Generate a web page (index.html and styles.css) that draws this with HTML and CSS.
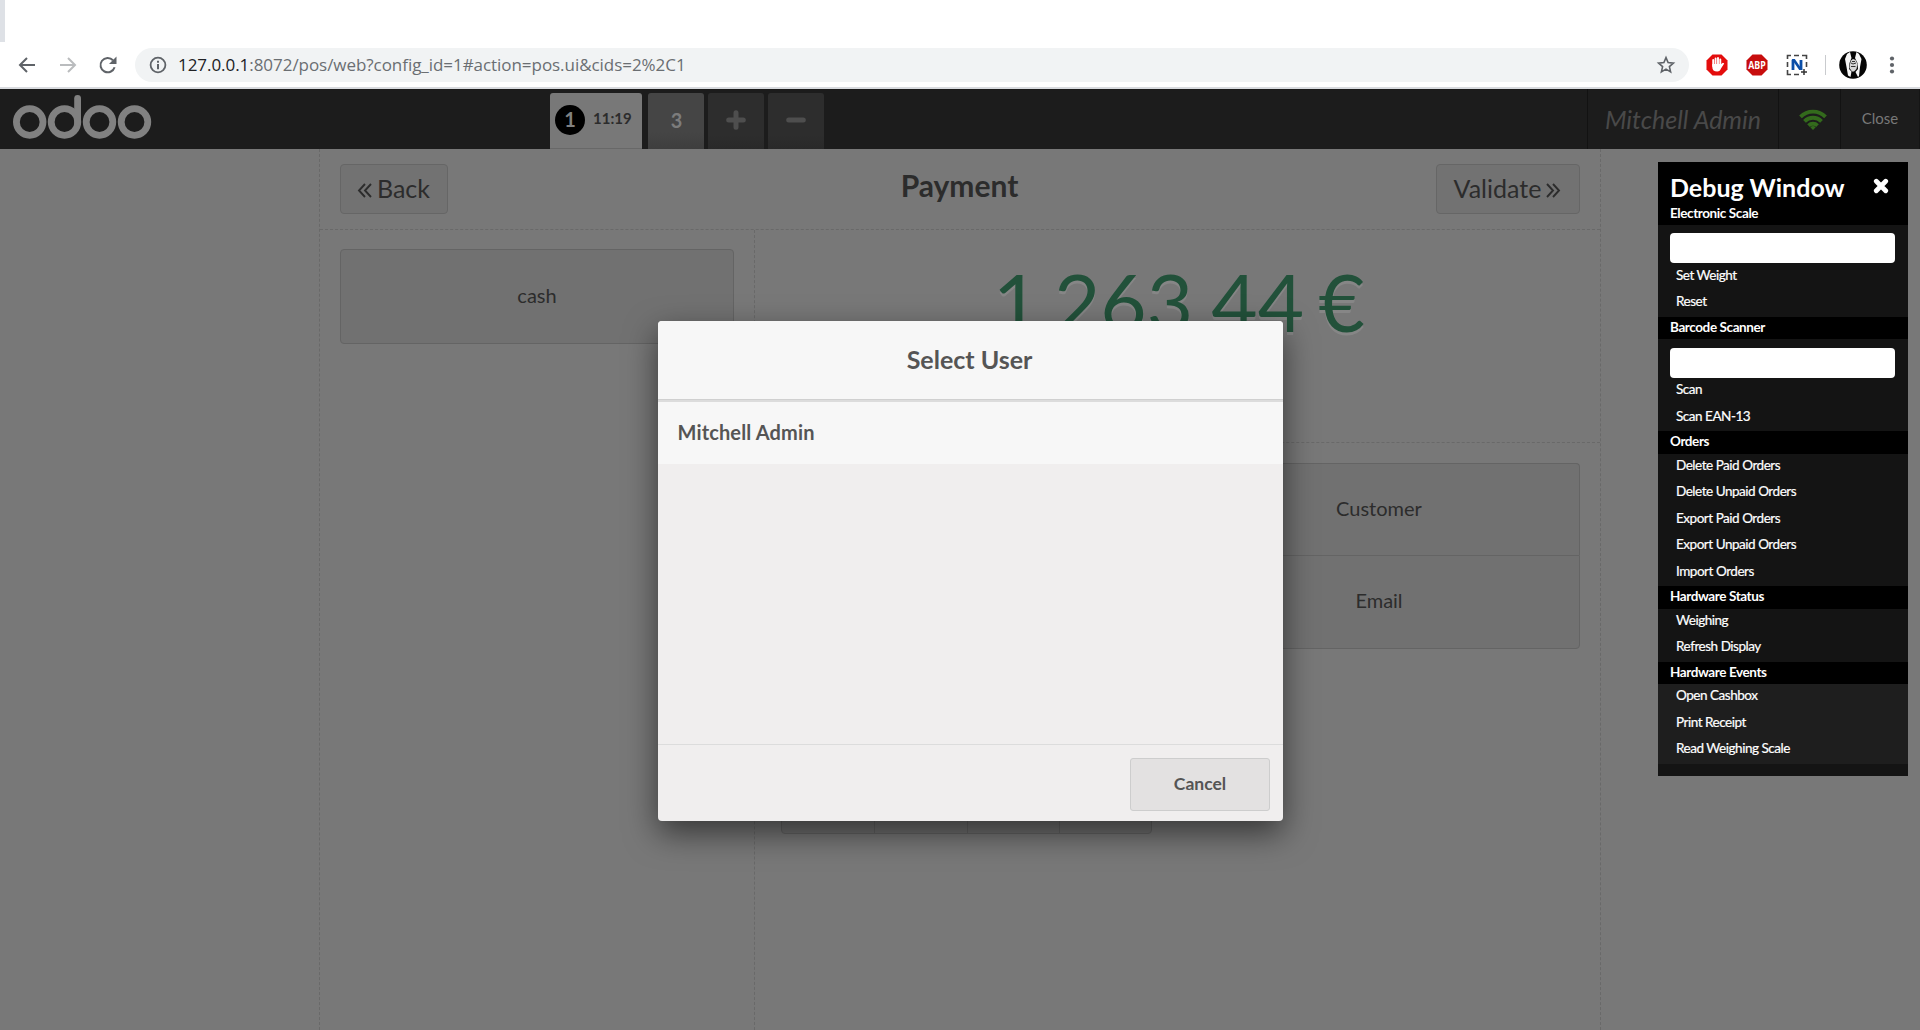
FILE: index.html
```html
<!DOCTYPE html>
<html lang="en">
<head>
<meta charset="utf-8">
<title>Odoo POS</title>
<link rel="stylesheet" href="styles.css">
</head>
<body>
<div class="tabstrip"><div class="tab-edge"></div></div>
<div class="toolbar">
  <svg class="nav back" width="18" height="18" viewBox="0 0 18 18"><path d="M17 9H2.500M9 2 2 9l7 7" fill="none" stroke="#5f6368" stroke-width="2"/></svg>
  <svg class="nav forward" width="18" height="18" viewBox="0 0 18 18"><path d="M1 9h14.500M9 2l7 7-7 7" fill="none" stroke="#babcbe" stroke-width="2"/></svg>
  <svg class="nav reload" width="20" height="20" viewBox="0 0 20 20"><path d="M16.600 12.200A7.200 7.200 0 1 1 15 5.200" fill="none" stroke="#5f6368" stroke-width="2"/><path d="M18.500 1.500v7.500H11z" fill="#5f6368"/></svg>
  <div class="omnibox">
    <svg width="18" height="18" viewBox="0 0 18 18"><circle cx="9" cy="9" r="7.400" fill="none" stroke="#5f6368" stroke-width="1.800"/><path d="M9 8v5.200M9 4.800v2" stroke="#5f6368" stroke-width="2"/></svg>
    <span class="url"><b>127.0.0.1</b>:8072/pos/web?config_id=1#action=pos.ui&amp;cids=2%2C1</span>
    <svg class="star" width="20" height="20" viewBox="0 0 20 20"><path d="M10 2.600l2.100 5 5.300.5-4 3.500 1.200 5.300L10 14.100l-4.600 2.800 1.200-5.300-4-3.500 5.300-.5z" fill="none" stroke="#5f6368" stroke-width="1.600"/></svg>
  </div>
  <svg class="ext" width="22" height="22" viewBox="0 0 22 22"><path d="M6.500.5h9l6 6v9l-6 6h-9l-6-6v-9z" fill="#e40d0d"/><path d="M7.200 6v6M9.600 4.500V12M12 4v8M14.300 5.500V12" stroke="#fff" stroke-width="1.900" stroke-linecap="round"/><path d="M6.300 10h9l1.600-1.200 1.300.6-3.200 5.200c-.8 2-1.600 3-3.800 3-3.200 0-4.900-1.600-4.900-4.600z" fill="#fff"/></svg>
  <svg class="ext" width="22" height="22" viewBox="0 0 22 22"><path d="M6.500.5h9l6 6v9l-6 6h-9l-6-6v-9z" fill="#c70d0d"/><text x="11" y="14.700" text-anchor="middle" textLength="17.500" lengthAdjust="spacingAndGlyphs" class="abp">ABP</text></svg>
  <svg class="ext" width="22" height="22" viewBox="0 0 22 22"><path d="M1.500 5V1.500H5M8 1.500h5M16 1.500h4.500V5M1.500 8v5M1.500 16v4.500H5M8 20.500h5M20.500 8v5" fill="none" stroke="#444" stroke-width="1.600"/><path d="M7 16V6M15 16V6" stroke="#0b4ea8" stroke-width="2.800"/><path d="M5.600 5h3.200l7.600 11h-3.200z" fill="#0b4ea8"/><path d="M18 15v6M15 18h6" stroke="#333" stroke-width="1.500"/></svg>
  <div class="tool-sep"></div>
  <svg class="avatar" width="28" height="28" viewBox="0 0 28 28"><circle cx="14" cy="14" r="13.800" fill="#050505"/><path d="M8 3 11 1l1.500 6L10.500 12l-.5 6 2.500 2.500L11.500 26 9 24.500 7.500 16 6 8zM20 3l-2.500-2L16 7l2.500 5 .5 6-2.500 3 2.500 5 1-1L21 16l1.500-8z" fill="#f6f6f6"/><path d="M12 9.500l2-1.500 2.500 1 2 4-1 5-2.500 2.500h-2L10.500 17l.5-4z" fill="#d8d8d8"/><path d="M12 12l2 1 3-1M12 15.500h4.500M13 10.500h3" fill="none" stroke="#333" stroke-width="1"/></svg>
  <svg class="menu" width="6" height="18" viewBox="0 0 6 18"><g fill="#5f6368"><circle cx="3" cy="2.500" r="2.100"/><circle cx="3" cy="9" r="2.100"/><circle cx="3" cy="15.500" r="2.100"/></g></svg>
</div>

<div class="pos">
  <header class="topbar">
    <svg class="logo" width="140" height="46" viewBox="0 0 140 46" role="img" aria-label="odoo"><g fill="none" stroke="#818181" stroke-width="6.800"><circle cx="17.700" cy="28" r="13.300"/><circle cx="52.500" cy="28" r="13.300"/><circle cx="87.500" cy="28" r="13.300"/><circle cx="122.500" cy="28" r="13.300"/><path d="M65.600 28V4.500" stroke-linecap="round"/></g></svg>
    <div class="orders">
      <div class="order active"><span class="num">1</span><span class="time">11:19</span></div>
      <div class="order third">3</div>
      <div class="order btn"><svg width="20" height="20" viewBox="0 0 20 20"><path d="M10 2.700v14.600M2.700 10h14.600" stroke="#4e4e4e" stroke-width="5" stroke-linecap="round"/></svg></div>
      <div class="order btn"><svg width="20" height="20" viewBox="0 0 20 20"><path d="M2.700 10h14.600" stroke="#4e4e4e" stroke-width="5" stroke-linecap="round"/></svg></div>
    </div>
    <div class="status">
      <div class="user">Mitchell Admin</div>
      <div class="wifi"><svg width="28" height="21" viewBox="0 0 28 21"><g fill="none" stroke="#336a1c" stroke-width="3.800"><path d="M1.500 7.800a17.500 17.500 0 0 1 25 0"/><path d="M5.500 12.300a12 12 0 0 1 17 0"/><path d="M9.500 16.600a6.400 6.400 0 0 1 9 0"/></g><path d="M11.300 18.300a3.800 3.800 0 0 1 5.400 0L14 21z" fill="#336a1c"/></svg></div>
      <div class="close">Close</div>
    </div>
  </header>

  <main class="payment">
    <div class="pay-head">
      <div class="button"><svg width="15" height="17" viewBox="0 0 15 17"><path d="M8 2 2 8.500 8 15M14 2 8 8.500l6 6.500" fill="none" stroke="#2c2c2c" stroke-width="1.900"/></svg>Back</div>
      <h1>Payment</h1>
      <div class="button next">Validate<svg width="15" height="17" viewBox="0 0 15 17"><path d="M1 2l6 6.500L1 15M7 2l6 6.500L7 15" fill="none" stroke="#2c2c2c" stroke-width="1.900"/></svg></div>
    </div>
    <div class="pay-body">
      <div class="methods"><div class="method">cash</div></div>
      <div class="details">
        <div class="amount">1&nbsp;263,44&nbsp;€</div>
        <div class="controls">
          <div class="numpad"><i></i><i></i><i></i><i></i></div>
          <div class="options"><div>Customer</div><div>Email</div></div>
        </div>
      </div>
    </div>
  </main>

  <section class="popup">
    <h2>Select User</h2>
    <div class="list"><div class="item">Mitchell Admin</div></div>
    <footer><div class="cancel">Cancel</div></footer>
  </section>

  <aside class="debug">
    <div class="debug-title"><h3>Debug Window</h3><svg width="16" height="16" viewBox="0 0 16 16"><path d="M3.300 3.300l9.400 9.400M12.700 3.300l-9.400 9.400" stroke="#fff" stroke-width="4.800" stroke-linecap="round"/></svg></div>
    <h4 class="first">Electronic Scale</h4>
    <ul><li class="field"><span></span></li><li>Set Weight</li><li>Reset</li></ul>
    <h4>Barcode Scanner</h4>
    <ul><li class="field low"><span></span></li><li>Scan</li><li>Scan EAN-13</li></ul>
    <h4>Orders</h4>
    <ul><li>Delete Paid Orders</li><li>Delete Unpaid Orders</li><li>Export Paid Orders</li><li>Export Unpaid Orders</li><li>Import Orders</li></ul>
    <h4>Hardware Status</h4>
    <ul><li>Weighing</li><li>Refresh Display</li></ul>
    <h4>Hardware Events</h4>
    <ul class="events"><li>Open Cashbox</li><li>Print Receipt</li><li>Read Weighing Scale</li></ul>
  </aside>
</div>
</body>
</html>
```
FILE: styles.css
```css
* { box-sizing: border-box; }
body {
  margin: 0;
  height: 1030px;
  display: flex;
  flex-direction: column;
  overflow: hidden;
  background: #fff;
  font-family: Lato, "Liberation Sans", sans-serif;
}
h1, h2, h3, h4, ul { margin: 0; padding: 0; }
svg { display: block; flex: none; }

/* browser chrome */
.tabstrip { height: 42px; flex: none; }
.tab-edge { width: 5px; height: 42px; background: #dee1e6; }
.toolbar {
  height: 47px;
  flex: none;
  display: flex;
  align-items: center;
  padding: 0 25px 0 18px;
  border-bottom: 2px solid #d9dbdf;
}
.forward { margin-left: 23px; }
.reload { margin-left: 21px; }
.omnibox {
  flex: none;
  width: 1554px;
  height: 34px;
  margin-left: 17px;
  padding: 0 13px 0 14px;
  border-radius: 17px;
  background: #f1f3f4;
  display: flex;
  align-items: center;
}
.url {
  margin-left: 11px;
  font: 17px/34px "Open Sans", "Noto Sans", sans-serif;
  letter-spacing: -0.05px;
  color: #6a6e72;
  white-space: nowrap;
}
.url b { font-weight: 400; color: #202124; }
.star { margin-left: auto; }
.ext { margin-left: 18px; }
.omnibox + .ext { margin-left: 17px; }
.abp { font: 700 10.500px "Open Sans", sans-serif; fill: #fff; }
.tool-sep { width: 1px; height: 20px; margin-left: 17px; background: #c9cbce; }
.avatar { margin-left: 13px; }
.menu { margin-left: auto; }

/* point of sale */
.pos {
  position: relative;
  flex: 1;
  display: flex;
  flex-direction: column;
  background: #787878;
  color: #2c2c2c;
}
.topbar { height: 60px; flex: none; display: flex; background: #1c1c1c; }
.logo { margin: 5px 0 0 12px; }
.orders { display: flex; gap: 4px; margin: 4px 0 0 398px; }
.order {
  width: 56px;
  height: 56px;
  display: flex;
  align-items: center;
  justify-content: center;
  padding-bottom: 2px;
  border-radius: 3px 3px 0 0;
  background: linear-gradient(#454545 70%, #3e3e3e);
  color: #7c7c7c;
  font-size: 20px;
  font-weight: 700;
}
.order.third { padding: 0 0 3px 1px; }
.order.btn { background: linear-gradient(#2d2d2d 75%, #292929); }
.order.active {
  width: 92px;
  margin-right: 2px;
  padding: 0 0 2px 5px;
  justify-content: flex-start;
  background: #787878;
  border-bottom: 1px solid #686868;
}
.num {
  width: 30px;
  height: 30px;
  border-radius: 50%;
  background: #000;
  color: #808080;
  text-align: center;
  line-height: 29px;
}
.time { margin: 0 0 3px 8px; font-size: 15px; color: #2c2c2c; }
.status { margin-left: auto; display: flex; border-right: 1px solid #151515; }
.status > div {
  border-left: 1px solid #121212;
  display: flex;
  align-items: center;
  justify-content: center;
}
.user { width: 191px; font-size: 25px; font-style: italic; color: #494949; }
.wifi { width: 62px; padding-left: 6px; }
.status > .close { width: 79px; padding-bottom: 2px; font-size: 15px; color: #787878; }

.payment {
  flex: 1;
  width: 1282px;
  margin-left: 319px;
  display: flex;
  flex-direction: column;
  border: 1px dashed #696969;
  border-width: 0 1px;
}
.pay-head {
  height: 81px;
  flex: none;
  display: flex;
  justify-content: space-between;
  align-items: flex-start;
  padding: 15px 20px 0;
  border-bottom: 1px dashed #696969;
}
.button {
  width: 108px;
  height: 50px;
  display: flex;
  align-items: center;
  justify-content: center;
  gap: 5px;
  padding: 0 1px 2px 0;
  border: 1px solid #666;
  border-radius: 4px;
  background: #727272;
  font-size: 25px;
}
.button svg { margin-top: 4px; }
.button.next { width: 144px; }
h1 { margin: 2px 0 0 35px; font-size: 30px; line-height: 38px; font-weight: 700; }
.pay-body { flex: 1; display: flex; }
.methods { width: 435px; padding: 19px 20px; border-right: 1px dashed #696969; }
.method {
  height: 95px;
  border: 1px solid #646464;
  border-radius: 4px;
  background: #717171;
  text-align: center;
  font-size: 20px;
  line-height: 90px;
}
.details { flex: 1; }
.amount {
  height: 213px;
  padding: 23px 0 0 3px;
  border-bottom: 1px dashed #696969;
  text-align: center;
  font-size: 80px;
  line-height: 96px;
  word-spacing: -6px;
  color: #22513a;
  text-shadow: 0 3px #868686;
}
.controls { display: flex; justify-content: space-between; padding: 20px 20px 0 26px; }
.numpad {
  width: 371px;
  height: 371px;
  display: grid;
  grid-template-columns: repeat(4, 1fr);
  border: 1px solid #646464;
  border-radius: 4px;
  background: #717171;
}
.numpad i + i { border-left: 1px solid #646464; }
.options { width: 402px; }
.options div {
  height: 94px;
  border: 1px solid #646464;
  border-radius: 0 0 4px 4px;
  background: #717171;
  text-align: center;
  font-size: 20px;
  line-height: 89px;
}
.options div:first-child { height: 92px; border-bottom: 0; border-radius: 4px 4px 0 0; }

/* user selection dialog */
.popup {
  position: absolute;
  left: 658px;
  top: 232px;
  width: 625px;
  height: 500px;
  display: flex;
  flex-direction: column;
  border-radius: 4px;
  overflow: hidden;
  background: #f0eeee;
  color: #555;
  box-shadow: 0 12px 32px rgba(0, 0, 0, .55);
}
.popup h2 {
  height: 79px;
  padding-right: 2px;
  border-bottom: 1px solid #d0d0d0;
  background: #f7f7f7;
  text-align: center;
  font-size: 25px;
  line-height: 76px;
  font-weight: 700;
}
.list { flex: 1; border-top: 2px solid #dcdcdc; }
.item {
  height: 62px;
  padding-left: 19.500px;
  background: #f7f7f7;
  font-size: 20px;
  line-height: 61px;
  letter-spacing: .15px;
  font-weight: 700;
}
.popup footer {
  height: 77px;
  padding: 13px 13px 0 0;
  display: flex;
  justify-content: flex-end;
  border-top: 1px solid #dcdcdc;
}
.cancel {
  width: 140px;
  height: 53px;
  border: 1px solid #cdcdcd;
  border-radius: 3px;
  background: #e3e1e1;
  text-align: center;
  font-size: 17.500px;
  line-height: 50px;
  font-weight: 700;
}

/* debug window */
.debug {
  position: absolute;
  left: 1658px;
  top: 73px;
  width: 250px;
  height: 614px;
  background: #141414;
  color: #fff;
}
.debug-title {
  height: 40px;
  padding: 10px 19px 0 12px;
  display: flex;
  justify-content: space-between;
  background: #000;
}
.debug-title svg { margin-top: 6px; }
h3 { font-size: 25px; line-height: 30px; font-weight: 700; }
h4 {
  height: 22.500px;
  padding-left: 12px;
  background: #000;
  font-size: 13.500px;
  line-height: 21px;
  letter-spacing: -.4px;
  font-weight: 700;
}
h4.first { height: 23px; line-height: 22px; }
.debug ul { list-style: none; }
.debug li {
  height: 26.500px;
  padding-left: 18px;
  font-size: 13.500px;
  line-height: 23px;
  letter-spacing: -.47px;
  -webkit-text-stroke: .2px #fff;
}
.debug li.field { height: 38.500px; padding: 8px 13px 0 12px; }
.debug li.low { padding-top: 9px; height: 39px; }
.field span { display: block; height: 30px; border-radius: 4px; background: #fff; }
.debug .events { background: #1e1e1e; }
```
